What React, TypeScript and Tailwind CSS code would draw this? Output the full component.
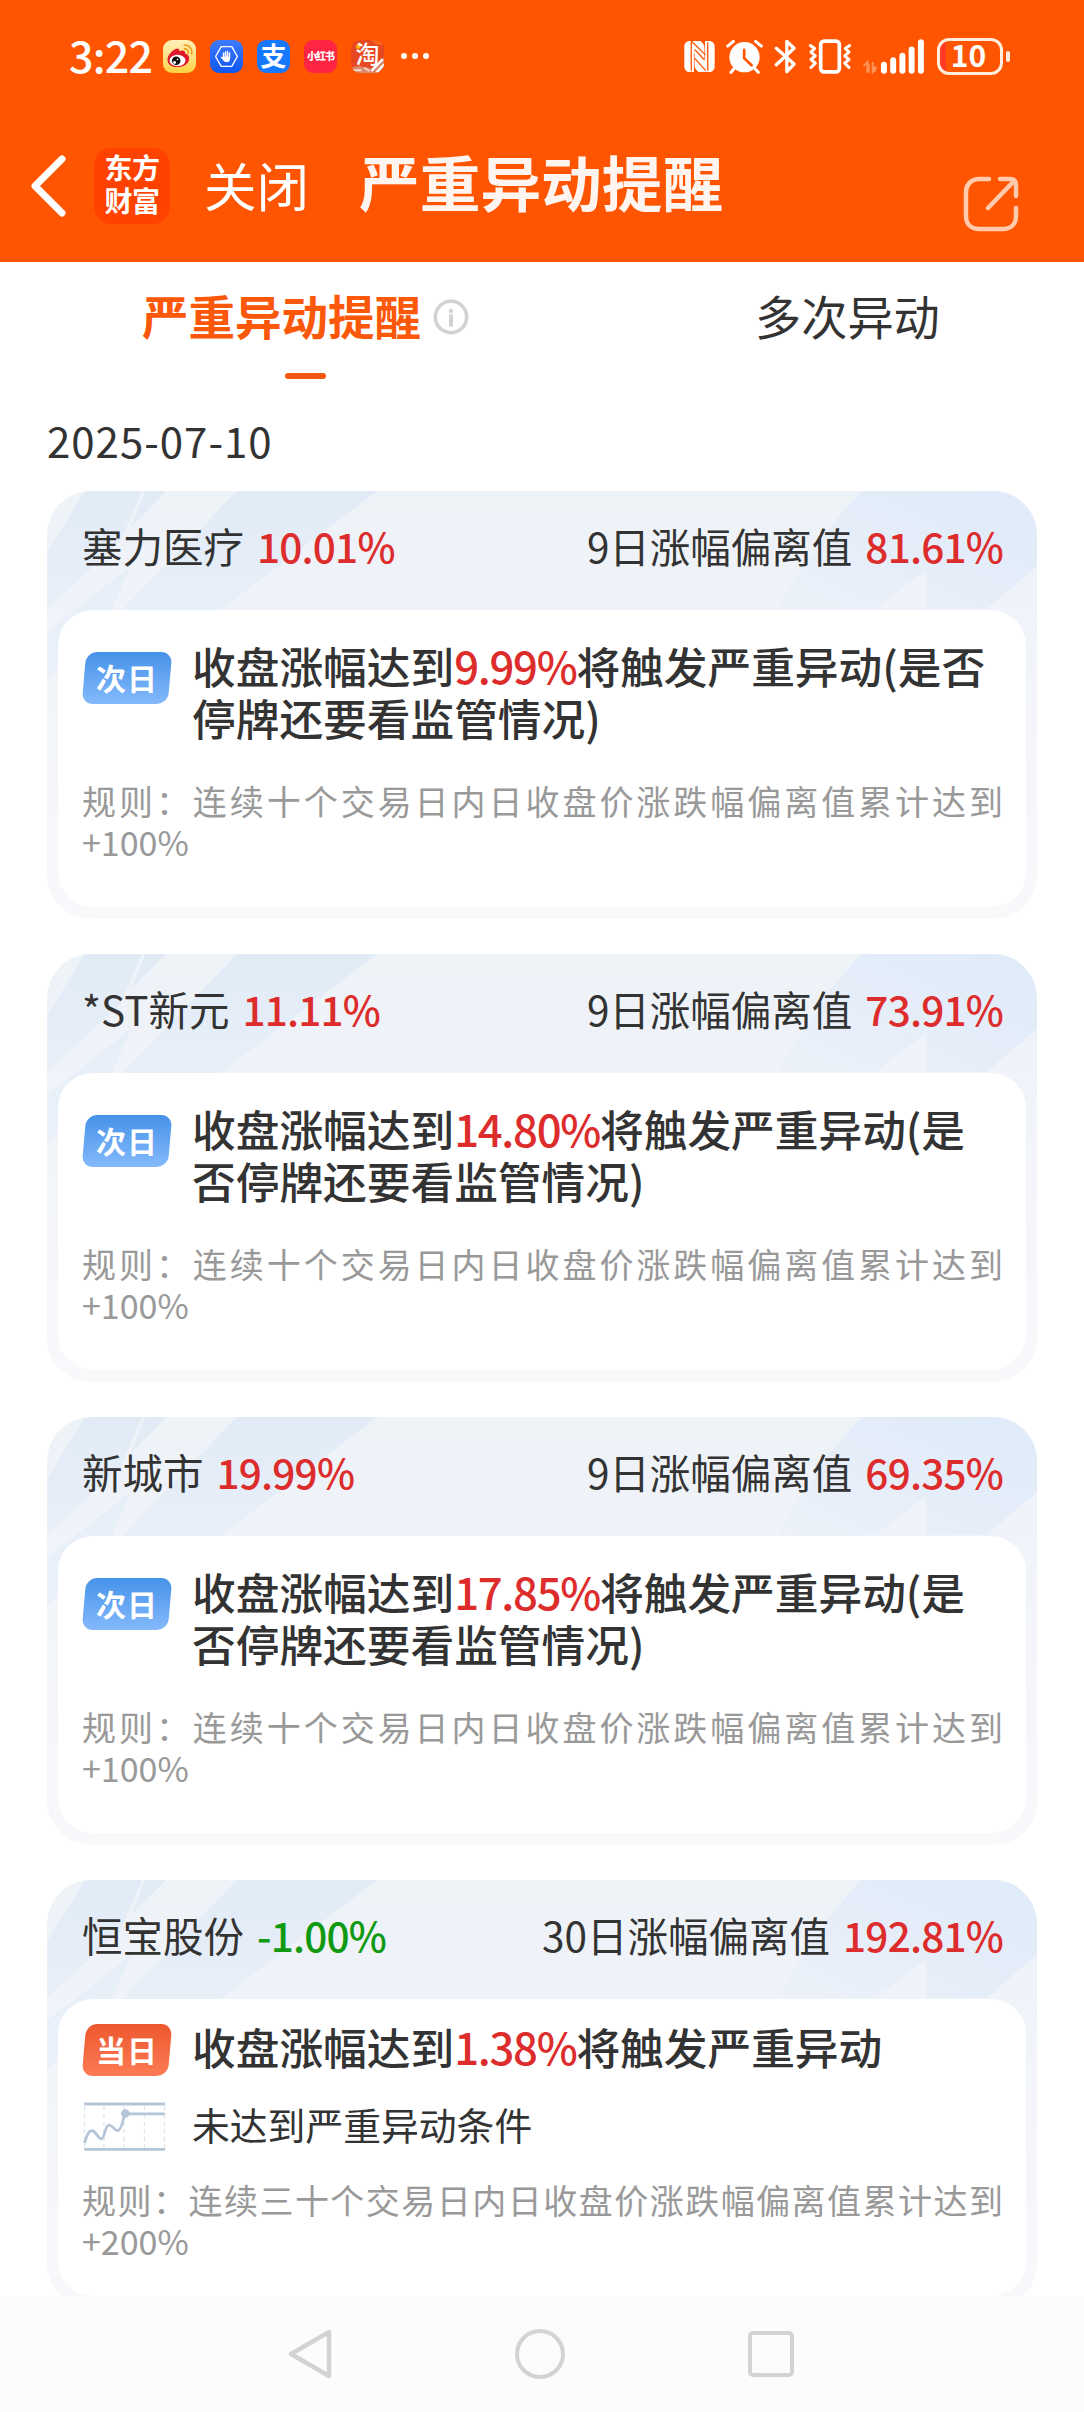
import type { ReactNode } from "react"

type Stock = {
  name: string
  change: string
  down?: boolean
  days: number
  deviation: string
  badge: "次日" | "当日"
  trigger: string
  suffix: string
  note?: string
  rule: string
  target: string
}

const stocks: Stock[] = [
  {
    name: "塞力医疗",
    change: "10.01%",
    days: 9,
    deviation: "81.61%",
    badge: "次日",
    trigger: "9.99%",
    suffix: "将触发严重异动(是否停牌还要看监管情况)",
    rule: "规则：连续十个交易日内日收盘价涨跌幅偏离值累计达到",
    target: "+100%",
  },
  {
    name: "*ST新元",
    change: "11.11%",
    days: 9,
    deviation: "73.91%",
    badge: "次日",
    trigger: "14.80%",
    suffix: "将触发严重异动(是否停牌还要看监管情况)",
    rule: "规则：连续十个交易日内日收盘价涨跌幅偏离值累计达到",
    target: "+100%",
  },
  {
    name: "新城市",
    change: "19.99%",
    days: 9,
    deviation: "69.35%",
    badge: "次日",
    trigger: "17.85%",
    suffix: "将触发严重异动(是否停牌还要看监管情况)",
    rule: "规则：连续十个交易日内日收盘价涨跌幅偏离值累计达到",
    target: "+100%",
  },
  {
    name: "恒宝股份",
    change: "-1.00%",
    down: true,
    days: 30,
    deviation: "192.81%",
    badge: "当日",
    trigger: "1.38%",
    suffix: "将触发严重异动",
    note: "未达到严重异动条件",
    rule: "规则：连续三十个交易日内日收盘价涨跌幅偏离值累计达到",
    target: "+200%",
  },
]

function AppIcon({ className, children }: { className: string; children: ReactNode }) {
  return (
    <div className={`flex h-[33px] w-[33px] items-center justify-center rounded-[9px] ${className}`}>{children}</div>
  )
}

function StatusBar() {
  return (
    <div className="flex h-[112px] items-center pl-[69px] text-white">
      <span className="-mt-[3px] w-[94px] text-[43px] leading-none font-medium tracking-[-0.8px]">3:22</span>
      <div className="flex items-center gap-[14px]">
        <AppIcon className="bg-gradient-to-b from-[#fff0b8] to-[#ffd23c]">
          <svg viewBox="0 0 100 100" className="h-full w-full">
            <path d="M14 62C12 46 28 32 38 27c8-4 13 0 11 7 8-4 20-4 18 7 10 3 15 11 11 22-5 14-22 20-38 19C26 81 15 74 14 62z" fill="#e0182c" />
            <ellipse cx="44" cy="62" rx="24" ry="17" fill="#fff" />
            <circle cx="40" cy="63" r="13" fill="#111" />
            <circle cx="35" cy="68" r="4.500" fill="#fff" />
            <circle cx="44" cy="59" r="2.500" fill="#fff" />
            <path d="M64 16c14-2 26 10 23 26M65 27c8-1 13 5 12 14" fill="none" stroke="#f0a31e" strokeWidth="5" strokeLinecap="round" />
          </svg>
        </AppIcon>
        <AppIcon className="bg-gradient-to-b from-[#3d7bff] to-[#0c55ee]">
          <svg viewBox="0 0 100 100" className="h-full w-full">
            <path d="M34 20h32l17 30-17 30H34L17 50z" fill="none" stroke="#fff" strokeWidth="4" />
            <path d="M41 40v14M47 36v18M53 35v18M59 39v15" stroke="#fff" strokeWidth="4.500" strokeLinecap="round" />
            <path d="M39 50h22v6c0 7-4 11-10 11s-9-3-12-7l-7-8c3-3 5-1 7 1z" fill="#fff" />
          </svg>
        </AppIcon>
        <AppIcon className="bg-[#1677ff]">
          <span className="-mt-[2px] text-[26px] leading-none font-bold">支</span>
        </AppIcon>
        <AppIcon className="bg-[#ff2442]">
          <span className="text-[10px] leading-none font-black tracking-[-1px] whitespace-nowrap">小红书</span>
        </AppIcon>
        <AppIcon className="relative bg-[#e8481f]">
          <svg viewBox="0 0 100 100" className="absolute inset-0 h-full w-full rounded-[9px]">
            <circle cx="22" cy="20" r="7" fill="#ffb400" />
            <path d="M62 0h34v14c-12 4-26 0-34-14z" fill="#ff6a1a" />
            <path d="M0 86c20-12 42-4 60 0 12-8 24-20 40-32v46H0z" fill="#d98a6c" />
            <path d="M96 58 62 94M100 74 78 98" stroke="#fff" strokeWidth="7" />
            <path d="M8 92h24M40 84l16 10" stroke="#f4d8c4" strokeWidth="6" />
          </svg>
          <span className="relative -mt-[7px] text-[24px] leading-none font-medium">淘</span>
        </AppIcon>
      </div>
      <div className="ml-[17px] flex gap-[5px]">
        <i className="h-[6px] w-[6px] rounded-full bg-white" />
        <i className="h-[6px] w-[6px] rounded-full bg-white" />
        <i className="h-[6px] w-[6px] rounded-full bg-white" />
      </div>

      <div className="mr-[74px] ml-auto flex items-center">
        {/* nfc */}
        <svg viewBox="72 60 94 98" className="h-[33px] w-[31px]">
          <path d="M92 62h-2c-10 0-17 7-17 17v60c0 10 7 17 17 17h12V96l32 38V84c0-11-5-16-12-22z" fill="#fff" />
          <path d="M146 156h2c10 0 17-7 17-17V79c0-10-7-17-17-17h-12v60l-32-38v50c0 11 5 16 12 22z" fill="#fff" />
          <path d="M94 64v90M94 62l43 42M104 88l30 31M104 114l34 38M144 66v86" stroke="#ff5500" strokeWidth="4" fill="none" />
        </svg>
        {/* alarm */}
        <svg viewBox="200 56 110 104" className="ml-[11px] h-[35px] w-[37px]">
          <circle cx="255" cy="110" r="45" fill="#fff" />
          <path d="M205 77l17-14M305 77l-17-14M225 143l-10 12M285 143l11 12" stroke="#fff" strokeWidth="9" strokeLinecap="round" />
          <path d="M254 88v25l22 21" fill="none" stroke="#ff5500" strokeWidth="8" strokeLinecap="round" />
        </svg>
        {/* bluetooth */}
        <svg viewBox="343 56 70 106" className="ml-[11px] h-[35px] w-[23px]">
          <path d="M350 84l54 48-22 23V63l22 21-54 50" fill="none" stroke="#fff" strokeWidth="10" strokeLinejoin="round" strokeLinecap="round" />
        </svg>
        {/* vibrate */}
        <svg viewBox="444 58 132 104" className="ml-[11px] h-[35px] w-[44px]">
          <rect x="482" y="64" width="56" height="92" rx="10" fill="none" stroke="#fff" strokeWidth="11" />
          <path d="M451 77l13 9-11 11 13 11-13 11 13 11-13 13M569 77l-13 9 11 11-13 11 13 11-13 11 13 13" fill="none" stroke="#fff" strokeWidth="9" strokeLinecap="round" strokeLinejoin="round" />
        </svg>
        {/* mobile signal */}
        <svg viewBox="608 54 190 106" className="ml-[10px] h-[35px] w-[63px]">
          <path d="M612 136l12-12v32M628 128v28M640 124v30l12-14M646 136v18" fill="none" stroke="#ff9258" strokeWidth="6" />
          <path d="M674 132v18M702 118v32M730 105v45M758 86v64M786 64v86" stroke="#fff" strokeWidth="18" strokeLinecap="round" />
        </svg>
        {/* battery */}
        <div className="ml-[12px] flex h-[37px] w-[66px] items-center justify-center rounded-[12px] border-[3px] border-[#ffeedd] bg-[linear-gradient(90deg,#ff3b24_6px,transparent_6px)] pr-[3px]">
          <span className="-mt-[4px] text-[30px] leading-none font-bold">10</span>
        </div>
        <i className="ml-[3px] h-[11px] w-[4px] rounded-full bg-[#ffeedd]" />
      </div>
    </div>
  )
}

function TitleBar() {
  return (
    <div className="flex h-[150px] items-start pl-[30px] text-white">
      <svg viewBox="0 0 36 62" className="mt-[43px] h-[62px] w-[36px]">
        <path d="M32 4 5 31l27 27" fill="none" stroke="#fff" strokeWidth="7" strokeLinecap="round" strokeLinejoin="round" />
      </svg>
      <div className="mt-[36px] ml-[28px] flex h-[76px] w-[76px] flex-col items-center justify-center rounded-[17px] bg-[#ff4200] pb-[4px] text-[28px] leading-[33px] font-bold tracking-[-0.5px]">
        <span>东方</span>
        <span>财富</span>
      </div>
      <span className="mt-[46px] ml-[34px] text-[52.500px] leading-[52px]">关闭</span>
      <h1 className="mt-[39px] ml-[50px] text-[60.700px] leading-[60px] font-bold text-[#fff5f0]">严重异动提醒</h1>
      <svg viewBox="0 0 56 56" className="mt-[64px] mr-[65px] ml-auto h-[56px] w-[56px]">
        <path d="M26 3H16C8 3 3 9 3 16v24c0 8 5 13 13 13h24c8 0 13-5 13-13v-8M37 3h10c4 0 6 2 6 6v11M25 32 51 5" fill="none" stroke="#ffcbac" strokeWidth="4.500" strokeLinecap="round" />
      </svg>
    </div>
  )
}

function Tabs() {
  return (
    <div className="flex h-[136px] text-[46.200px] leading-[60px]">
      <div className="flex w-[612px] flex-col items-center pt-[23px]">
        <div className="flex items-center gap-[12px] text-[46.500px] font-bold text-[#fb5809]">
          严重异动提醒
          <svg viewBox="0 0 36 36" className="mt-[3px] h-[36px] w-[36px]">
            <circle cx="18" cy="18" r="15.700" fill="none" stroke="#d2d2d2" strokeWidth="3.600" />
            <circle cx="18" cy="12" r="2.200" fill="#d2d2d2" />
            <path d="M18 17v9" stroke="#d2d2d2" strokeWidth="4" strokeLinecap="round" />
          </svg>
        </div>
        <i className="mt-[28px] h-[6px] w-[41px] rounded-full bg-[#f2590f]" />
      </div>
      <div className="w-[474px] pt-[23px] text-center text-[#333]">多次异动</div>
    </div>
  )
}

function CardBackdrop() {
  return (
    <svg viewBox="0 0 990 428" className="absolute inset-0 h-full w-full">
      <defs>
        <linearGradient id="card-base" x1="0" y1="0" x2="0" y2="1">
          <stop offset="0" stopColor="#eef3f8" />
          <stop offset="0.280" stopColor="#f0f3f9" />
          <stop offset="1" stopColor="#f8f9fb" />
        </linearGradient>
        <linearGradient id="card-ray" gradientUnits="userSpaceOnUse" x1="0" y1="0" x2="0" y2="160">
          <stop offset="0" stopColor="#e1ebf6" />
          <stop offset="1" stopColor="#eaf1fa" />
        </linearGradient>
        <linearGradient id="card-corner" x1="0" y1="1" x2="1" y2="0">
          <stop offset="0" stopColor="#edf2f9" />
          <stop offset="0.500" stopColor="#e5edf9" />
          <stop offset="1" stopColor="#dfebf9" />
        </linearGradient>
      </defs>
      <rect width="990" height="428" fill="url(#card-base)" />
      <path d="M38 0h57L73 51 0 118V62z" fill="url(#card-ray)" />
      <path d="M98 0h21L84 36z" fill="url(#card-ray)" />
      <path d="M190 0h140L175 118 120 160H60l16-42z" fill="url(#card-ray)" />
      <path d="M84 75 65 118 0 190v-49z" fill="url(#card-ray)" />
      <path d="M814 0h176v75l-50 43h-61V79l-51 39h-95c10-30 32-50 50-82z" fill="url(#card-corner)" />
    </svg>
  )
}

function DayBadge({ text }: { text: Stock["badge"] }) {
  const color = text === "当日" ? "from-[#ec572d] to-[#fd7b54]" : "from-[#4592e9] to-[#83b9fb]"
  return (
    <div className="relative flex h-[52px] w-[90px] shrink-0 items-center justify-center">
      <div className={`absolute inset-y-0 right-[2px] left-[2px] -skew-x-[5deg] rounded-[11px] bg-gradient-to-b ${color}`} />
      <span className="relative -mt-[3px] text-[30px] leading-none font-bold tracking-[1px] text-white">{text}</span>
    </div>
  )
}

function TrendIcon() {
  return (
    <svg viewBox="160 730 255 155" className="h-[51px] w-[85px]">
      <path d="M166 746v126M225 746v126M286 746v126M348 746v126M409 746v126" stroke="#dde5ee" strokeWidth="4" strokeDasharray="14 9" />
      <path d="M165 739h246M165 877h246" stroke="#b4c5d8" strokeWidth="9" />
      <path d="M166 858c8-28 14-40 24-38 12 3 16 24 27 25 12-2 10-42 24-42 12 1 16 18 26 17 14-3 14-36 23-51h120" fill="none" stroke="#b4c5d8" strokeWidth="8" />
      <circle cx="290" cy="768" r="13" fill="#b4c5d8" />
    </svg>
  )
}

function StockCard({ stock }: { stock: Stock }) {
  return (
    <div className="relative h-[428px] shrink-0 overflow-hidden rounded-[44px]">
      <CardBackdrop />
      <div className="relative flex h-full flex-col px-[11px] pb-[12px]">
        <div className="flex h-[119px] items-center justify-between pr-[23px] pb-[9px] pl-[24px] text-[40.500px] leading-[56px] text-[#333]">
          <span className="flex gap-[13px]">
            <span>{stock.name}</span>
            <b className={`font-medium tracking-[-0.8px] ${stock.down ? "text-[#119911]" : "text-[#dd2c2c]"}`}>
              {stock.change}
            </b>
          </span>
          <span className="flex gap-[13px]">
            <span>{stock.days}日涨幅偏离值</span>
            <b className="font-medium tracking-[-0.8px] text-[#dd2c2c]">{stock.deviation}</b>
          </span>
        </div>

        <div className={`flex-1 rounded-[35px] bg-white pr-[23px] pl-[24px] ${stock.note ? "pt-[21px]" : "pt-[29px]"}`}>
          <div className="flex">
            <div className={stock.note ? "mt-[4px]" : "mt-[13px]"}>
              <DayBadge text={stock.badge} />
            </div>
            <p className="ml-[20px] flex-1 text-[43.700px] leading-[52px] font-medium text-[#333]">
              收盘涨幅达到<span className="tracking-[-1.300px] text-[#dd2c2c]">{stock.trigger}</span>
              {stock.suffix}
            </p>
          </div>
          {stock.note && (
            <div className="mt-[25px] flex h-[51px] items-center text-[37.800px] leading-[51px] text-[#333]">
              <TrendIcon />
              <span className="-mt-[6px] ml-[25px]">{stock.note}</span>
            </div>
          )}
          <p className={`text-[34px] leading-[41px] text-[#999] ${stock.note ? "mt-[27px]" : "mt-[37px]"}`}>
            <span className="block text-justify [text-align-last:justify]">{stock.rule}</span>
            {stock.target}
          </p>
        </div>
      </div>
    </div>
  )
}

function NavBar() {
  return (
    <div className="flex h-[116px] shrink-0 items-center justify-between bg-[#fcfcfc] pr-[290px] pl-[288px]">
      <svg viewBox="0 0 44 50" className="h-[50px] w-[44px]">
        <path d="M41 3v44L3 25z" fill="none" stroke="#d3d3d3" strokeWidth="4.500" strokeLinejoin="round" />
      </svg>
      <i className="h-[50px] w-[50px] rounded-full border-4 border-[#d3d3d3]" />
      <i className="h-[46px] w-[46px] rounded-[5px] border-4 border-[#d3d3d3]" />
    </div>
  )
}

export default function App() {
  return (
    <div className="flex h-[2412px] w-[1084px] flex-col overflow-hidden bg-white font-['Noto_Sans_CJK_SC',sans-serif]">
      <header className="h-[262px] shrink-0 bg-[#ff5500]">
        <StatusBar />
        <TitleBar />
      </header>
      <main className="min-h-0 flex-1 overflow-hidden">
        <Tabs />
        <div className="mb-[19px] h-[74px] pl-[47px] text-[42px] leading-[83px] tracking-[1px] text-[#333]">2025-07-10</div>
        <div className="flex flex-col gap-[35px] px-[47px]">
          {stocks.map((stock) => (
            <StockCard key={stock.name} stock={stock} />
          ))}
        </div>
      </main>
      <NavBar />
    </div>
  )
}
